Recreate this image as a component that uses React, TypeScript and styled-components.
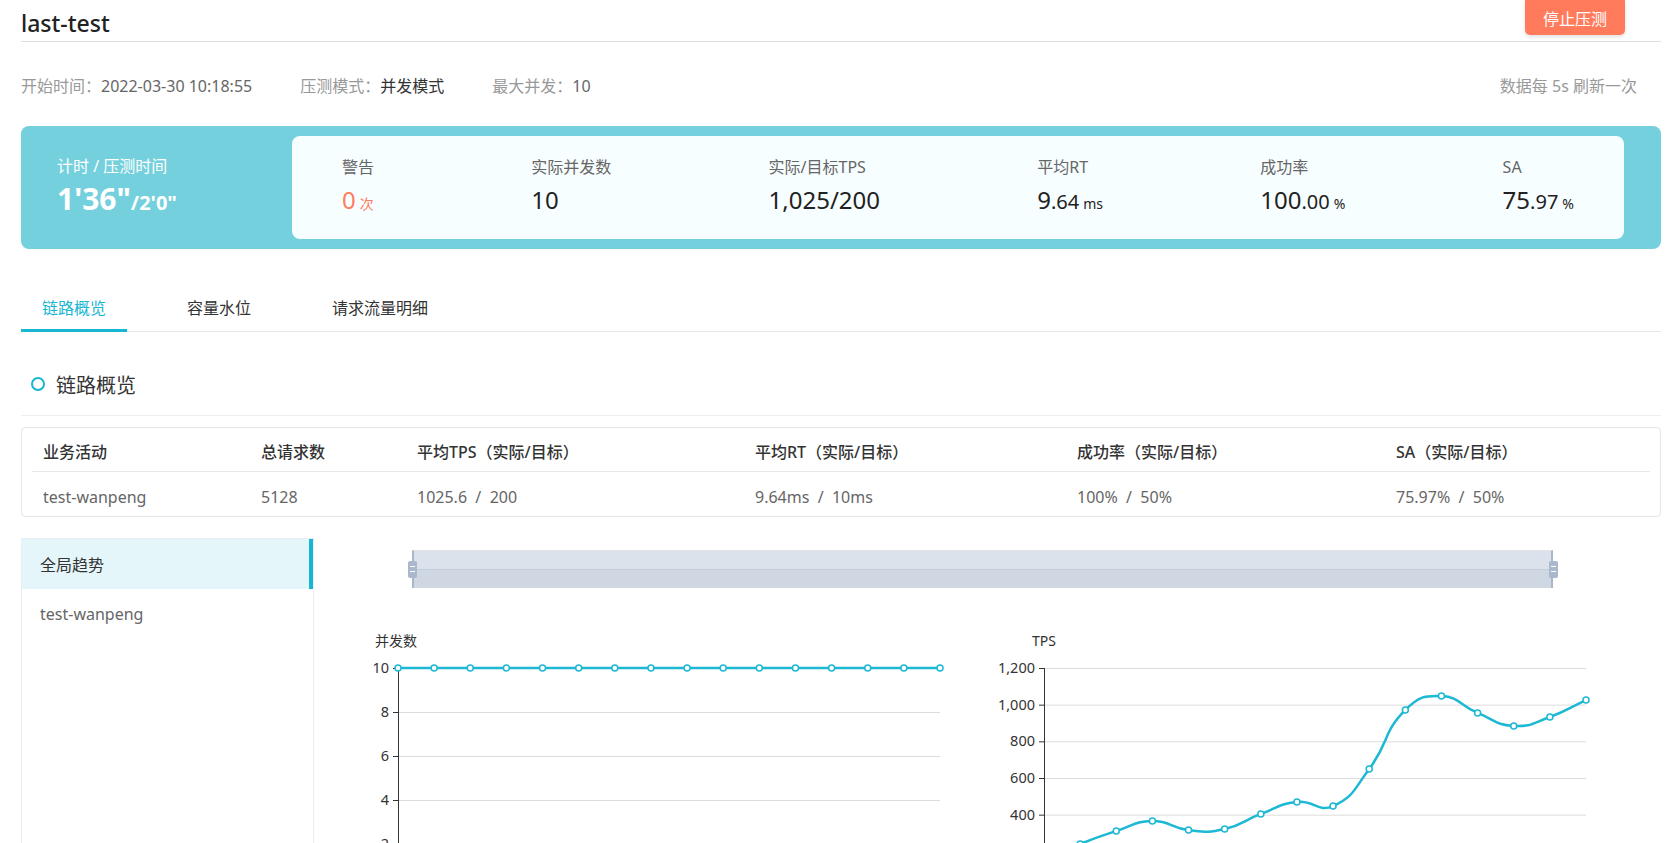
import React from 'react';
import styled, { createGlobalStyle } from 'styled-components';

const FONT = `"Noto Sans", "Noto Sans CJK SC", sans-serif`;
const TEAL = '#17b6d2';
const ORANGE = '#ff7b5c';

const GlobalStyle = createGlobalStyle`
  html, body { margin: 0; padding: 0; overflow: hidden; background: #fff; }
  body { font-family: ${FONT}; color: #333; }
  * { box-sizing: border-box; }
`;

const Page = styled.div`
  width: 1680px;
  padding: 0 19px 0 21px;
`;

const Header = styled.header`
  display: flex;
  justify-content: space-between;
  align-items: flex-start;
  height: 42px;
  border-bottom: 1px solid #dedede;
`;

const Title = styled.h1`
  margin: 8px 0 0;
  font-size: 23px;
  line-height: 30px;
  font-weight: 500;
  color: #222;
`;

const StopButton = styled.button`
  margin-right: 36px;
  height: 35px;
  padding: 0 18px;
  border: none;
  border-radius: 0 0 5px 5px;
  background: ${ORANGE};
  color: #fff;
  font-family: ${FONT};
  font-size: 16px;
  box-shadow: 0 2px 4px rgba(0, 0, 0, 0.12);
  cursor: pointer;
`;

const MetaRow = styled.div`
  display: flex;
  justify-content: space-between;
  align-items: center;
  margin-top: 34px;
  height: 20px;
  font-size: 16px;
  line-height: 20px;
`;

const MetaGroup = styled.div`
  display: flex;
  gap: 48px;
`;

const MetaItem = styled.span`
  color: #999;
`;

const MetaValue = styled.span<{ $strong?: boolean }>`
  color: ${(p) => (p.$strong ? '#333' : '#666')};
`;

const RefreshNote = styled.span`
  color: #999;
  padding-right: 24px;
`;

const Banner = styled.section`
  display: flex;
  margin-top: 30px;
  height: 123px;
  padding: 10px 37px 10px 0;
  background: #74d0dd;
  border-radius: 8px;
`;

const Timer = styled.div`
  width: 271px;
  padding: 20px 0 0 36px;
  color: #fff;
`;

const TimerLabel = styled.div`
  font-size: 16px;
  line-height: 20px;
`;

const TimerValue = styled.div`
  margin-top: 7px;
  line-height: 32px;
  font-weight: 700;
  font-size: 30px;
`;

const TimerTotal = styled.span`
  font-size: 20px;
`;

const MetricCard = styled.div`
  flex: 1;
  display: flex;
  justify-content: space-between;
  align-items: flex-start;
  padding: 20px 50px 0;
  background: #f7feff;
  border-radius: 8px;
`;

const Metric = styled.div`
  display: flex;
  flex-direction: column;
`;

const MetricLabel = styled.div`
  font-size: 16px;
  line-height: 22px;
  color: #666;
`;

const MetricValue = styled.div<{ $color?: string }>`
  margin-top: 6px;
  font-size: 24px;
  line-height: 32px;
  color: ${(p) => p.$color || '#222'};
  white-space: nowrap;
`;

const Decimal = styled.span`
  font-size: 20px;
`;

const Unit = styled.span`
  font-size: 14px;
  margin-left: 4px;
`;

const TabBar = styled.nav`
  display: flex;
  gap: 39px;
  margin-top: 36px;
  border-bottom: 1px solid #e8e8e8;
`;

const Tab = styled.div<{ $active?: boolean }>`
  height: 47px;
  margin-bottom: -1px;
  padding: 0 21px;
  display: flex;
  align-items: center;
  font-size: 16px;
  color: ${(p) => (p.$active ? TEAL : '#333')};
  border-bottom: 3px solid ${(p) => (p.$active ? TEAL : 'transparent')};
  cursor: pointer;
`;

const SectionHeader = styled.div`
  display: flex;
  align-items: center;
  gap: 11px;
  margin-top: 21px;
  height: 63px;
  padding-left: 10px;
  border-bottom: 1px solid #eee;
`;

const Ring = styled.span`
  width: 14px;
  height: 14px;
  border: 2px solid ${TEAL};
  border-radius: 50%;
`;

const SectionTitle = styled.h2`
  margin: 0;
  font-size: 20px;
  font-weight: 400;
  color: #333;
`;

const TableBox = styled.div`
  margin-top: 11px;
  padding: 0 10px;
  border: 1px solid #e6e6e6;
  border-radius: 4px;
`;

const TableRow = styled.div<{ $head?: boolean }>`
  display: grid;
  grid-template-columns: 218px 156px 338px 322px 319px 1fr;
  padding: ${(p) => (p.$head ? '13px 0 8px' : '14px 0 8px')};
  line-height: 22px;
  font-size: 16px;
  color: ${(p) => (p.$head ? '#333' : '#666')};
  font-weight: ${(p) => (p.$head ? 500 : 400)};
  border-bottom: ${(p) => (p.$head ? '1px solid #e8e8e8' : 'none')};
`;

const Cell = styled.div`
  padding-left: 11px;
  white-space: pre;
`;

const Bottom = styled.div`
  display: flex;
  margin-top: 21px;
`;

const Sidebar = styled.aside`
  width: 293px;
  height: 360px;
  border: 1px solid #e8eef8;
  border-bottom: none;
`;

const SideItem = styled.div<{ $active?: boolean }>`
  height: 50px;
  display: flex;
  align-items: center;
  padding-left: 18px;
  font-size: 16px;
  color: ${(p) => (p.$active ? '#333' : '#666')};
  background: ${(p) => (p.$active ? '#e5f6fa' : 'transparent')};
  border-right: 4px solid ${(p) => (p.$active ? TEAL : 'transparent')};
`;

const ChartArea = styled.div`
  flex: 1;
`;

const Slider = styled.div`
  position: relative;
  height: 38px;
  margin: 12px 108px 0 98px;
  background: linear-gradient(#dbe2ec 0, #dbe2ec 18px, #c2ccda 18px, #c2ccda 19px, #ced7e2 19px);
  border-top: 1px solid #e2e2e2;
  border-left: 2px solid #a9b7cb;
  border-right: 2px solid #a9b7cb;
`;

const Handle = styled.span<{ $side: 'left' | 'right' }>`
  position: absolute;
  top: 10px;
  ${(p) => (p.$side === 'left' ? 'left: -6px;' : 'right: -7px;')}
  width: 9px;
  height: 17px;
  background: #a9b8cc;
  border-radius: 2px;
  &::before,
  &::after {
    content: '';
    position: absolute;
    left: 2px;
    width: 5px;
    height: 1px;
    background: #fff;
  }
  &::before { top: 5px; }
  &::after { top: 10px; }
`;

const ChartsRow = styled.div`
  display: grid;
  grid-template-columns: 657px 657px;
  margin-top: 44px;
  padding-left: 26px;
`;

const ChartBlock = styled.div`
  display: flex;
  flex-direction: column;
`;

const ChartTitle = styled.div`
  padding-left: 35px;
  font-size: 14px;
  line-height: 18px;
  color: #333;
`;

const PLOT_W = 542;
const PLOT_TOP = 18;
const PLOT_H = 220;

type Pt = [number, number];

function smoothPath(pts: Pt[], smooth = 0.5): string {
  if (pts.length < 2) return '';
  let d = `M${pts[0][0]},${pts[0][1]}`;
  const cps: { prev: Pt; next: Pt }[] = pts.map((p, i) => {
    const prev = pts[i - 1] || p;
    const next = pts[i + 1] || p;
    const vx = next[0] - prev[0];
    const vy = next[1] - prev[1];
    let d0 = Math.hypot(p[0] - prev[0], p[1] - prev[1]);
    let d1 = Math.hypot(p[0] - next[0], p[1] - next[1]);
    const sum = d0 + d1 || 1;
    d0 /= sum;
    d1 /= sum;
    return {
      prev: [p[0] - vx * smooth * d0, p[1] - vy * smooth * d0],
      next: [p[0] + vx * smooth * d1, p[1] + vy * smooth * d1],
    };
  });
  for (let i = 1; i < pts.length; i++) {
    const a = cps[i - 1].next;
    const b = cps[i].prev;
    d += ` C${a[0]},${a[1]} ${b[0]},${b[1]} ${pts[i][0]},${pts[i][1]}`;
  }
  return d;
}

type ChartProps = {
  title: string;
  values: number[];
  max: number;
  step: number;
  axisLeft: number;
  smooth: boolean;
};

const fmt = (v: number) => v.toLocaleString('en-US');

function LineChart({ title, values, max, step, axisLeft, smooth }: ChartProps) {
  const n = values.length;
  const pts: Pt[] = values.map((v, i) => [
    axisLeft + (i * PLOT_W) / (n - 1),
    PLOT_TOP + PLOT_H * (1 - v / max),
  ]);
  const ticks: number[] = [];
  for (let v = 0; v <= max; v += step) ticks.push(v);
  const yOf = (v: number) => PLOT_TOP + PLOT_H * (1 - v / max);
  const path = smooth
    ? smoothPath(pts)
    : 'M' + pts.map((p) => `${p[0]},${p[1]}`).join(' L');
  return (
    <ChartBlock>
      <ChartTitle>{title}</ChartTitle>
      <svg width={620} height={260} style={{ display: 'block' }}>
        {ticks.map((t) => (
          <g key={t}>
            <line x1={axisLeft} x2={axisLeft + PLOT_W} y1={yOf(t) + 0.5} y2={yOf(t) + 0.5} stroke="#dcdcdc" />
            <line x1={axisLeft - 5} x2={axisLeft} y1={yOf(t) + 0.5} y2={yOf(t) + 0.5} stroke="#333" />
            <text
              x={axisLeft - 9}
              y={yOf(t) + 5}
              textAnchor="end"
              fontSize={14.5}
              fill="#333"
              fontFamily={FONT}
            >
              {fmt(t)}
            </text>
          </g>
        ))}
        <line x1={axisLeft + 0.5} x2={axisLeft + 0.5} y1={PLOT_TOP} y2={PLOT_TOP + PLOT_H} stroke="#333" />
        <path d={path} fill="none" stroke="#1cb8d4" strokeWidth={2.5} />
        {pts.map((p, i) => (
          <circle key={i} cx={p[0]} cy={p[1]} r={3} fill="#fff" stroke="#1cb8d4" strokeWidth={1.5} />
        ))}
      </svg>
    </ChartBlock>
  );
}

const concurrency = Array.from({ length: 16 }, () => 10);
const tps = [150, 240, 311, 365, 316, 322, 404, 469, 447, 649, 971, 1047, 955, 884, 933, 1025];

const metrics = [
  { label: '警告', value: <MetricValue $color={ORANGE}>0<Unit>次</Unit></MetricValue> },
  { label: '实际并发数', value: <MetricValue>10</MetricValue> },
  { label: '实际/目标TPS', value: <MetricValue>1,025/200</MetricValue> },
  { label: '平均RT', value: <MetricValue>9<Decimal>.64</Decimal><Unit>ms</Unit></MetricValue> },
  { label: '成功率', value: <MetricValue>100<Decimal>.00</Decimal><Unit>%</Unit></MetricValue> },
  { label: 'SA', value: <MetricValue>75<Decimal>.97</Decimal><Unit>%</Unit></MetricValue> },
];

const heads = ['业务活动', '总请求数', '平均TPS（实际/目标）', '平均RT（实际/目标）', '成功率（实际/目标）', 'SA（实际/目标）'];
const row = ['test-wanpeng', '5128', '1025.6  /  200', '9.64ms  /  10ms', '100%  /  50%', '75.97%  /  50%'];

export default function App() {
  return (
    <>
      <GlobalStyle />
      <Page>
        <Header>
          <Title>last-test</Title>
          <StopButton>停止压测</StopButton>
        </Header>

        <MetaRow>
          <MetaGroup>
            <MetaItem>开始时间：<MetaValue>2022-03-30 10:18:55</MetaValue></MetaItem>
            <MetaItem>压测模式：<MetaValue $strong>并发模式</MetaValue></MetaItem>
            <MetaItem>最大并发：<MetaValue>10</MetaValue></MetaItem>
          </MetaGroup>
          <RefreshNote>数据每 5s 刷新一次</RefreshNote>
        </MetaRow>

        <Banner>
          <Timer>
            <TimerLabel>计时 / 压测时间</TimerLabel>
            <TimerValue>1'36"<TimerTotal>/2'0"</TimerTotal></TimerValue>
          </Timer>
          <MetricCard>
            {metrics.map((m) => (
              <Metric key={m.label}>
                <MetricLabel>{m.label}</MetricLabel>
                {m.value}
              </Metric>
            ))}
          </MetricCard>
        </Banner>

        <TabBar>
          <Tab $active>链路概览</Tab>
          <Tab>容量水位</Tab>
          <Tab>请求流量明细</Tab>
        </TabBar>

        <SectionHeader>
          <Ring />
          <SectionTitle>链路概览</SectionTitle>
        </SectionHeader>

        <TableBox>
          <TableRow $head>
            {heads.map((h) => (
              <Cell key={h}>{h}</Cell>
            ))}
          </TableRow>
          <TableRow>
            {row.map((c, i) => (
              <Cell key={i}>{c}</Cell>
            ))}
          </TableRow>
        </TableBox>

        <Bottom>
          <Sidebar>
            <SideItem $active>全局趋势</SideItem>
            <SideItem>test-wanpeng</SideItem>
          </Sidebar>
          <ChartArea>
            <Slider>
              <Handle $side="left" />
              <Handle $side="right" />
            </Slider>
            <ChartsRow>
              <LineChart title="并发数" values={concurrency} max={10} step={2} axisLeft={58} smooth={false} />
              <LineChart title="TPS" values={tps} max={1200} step={200} axisLeft={47} smooth />
            </ChartsRow>
          </ChartArea>
        </Bottom>
      </Page>
    </>
  );
}
